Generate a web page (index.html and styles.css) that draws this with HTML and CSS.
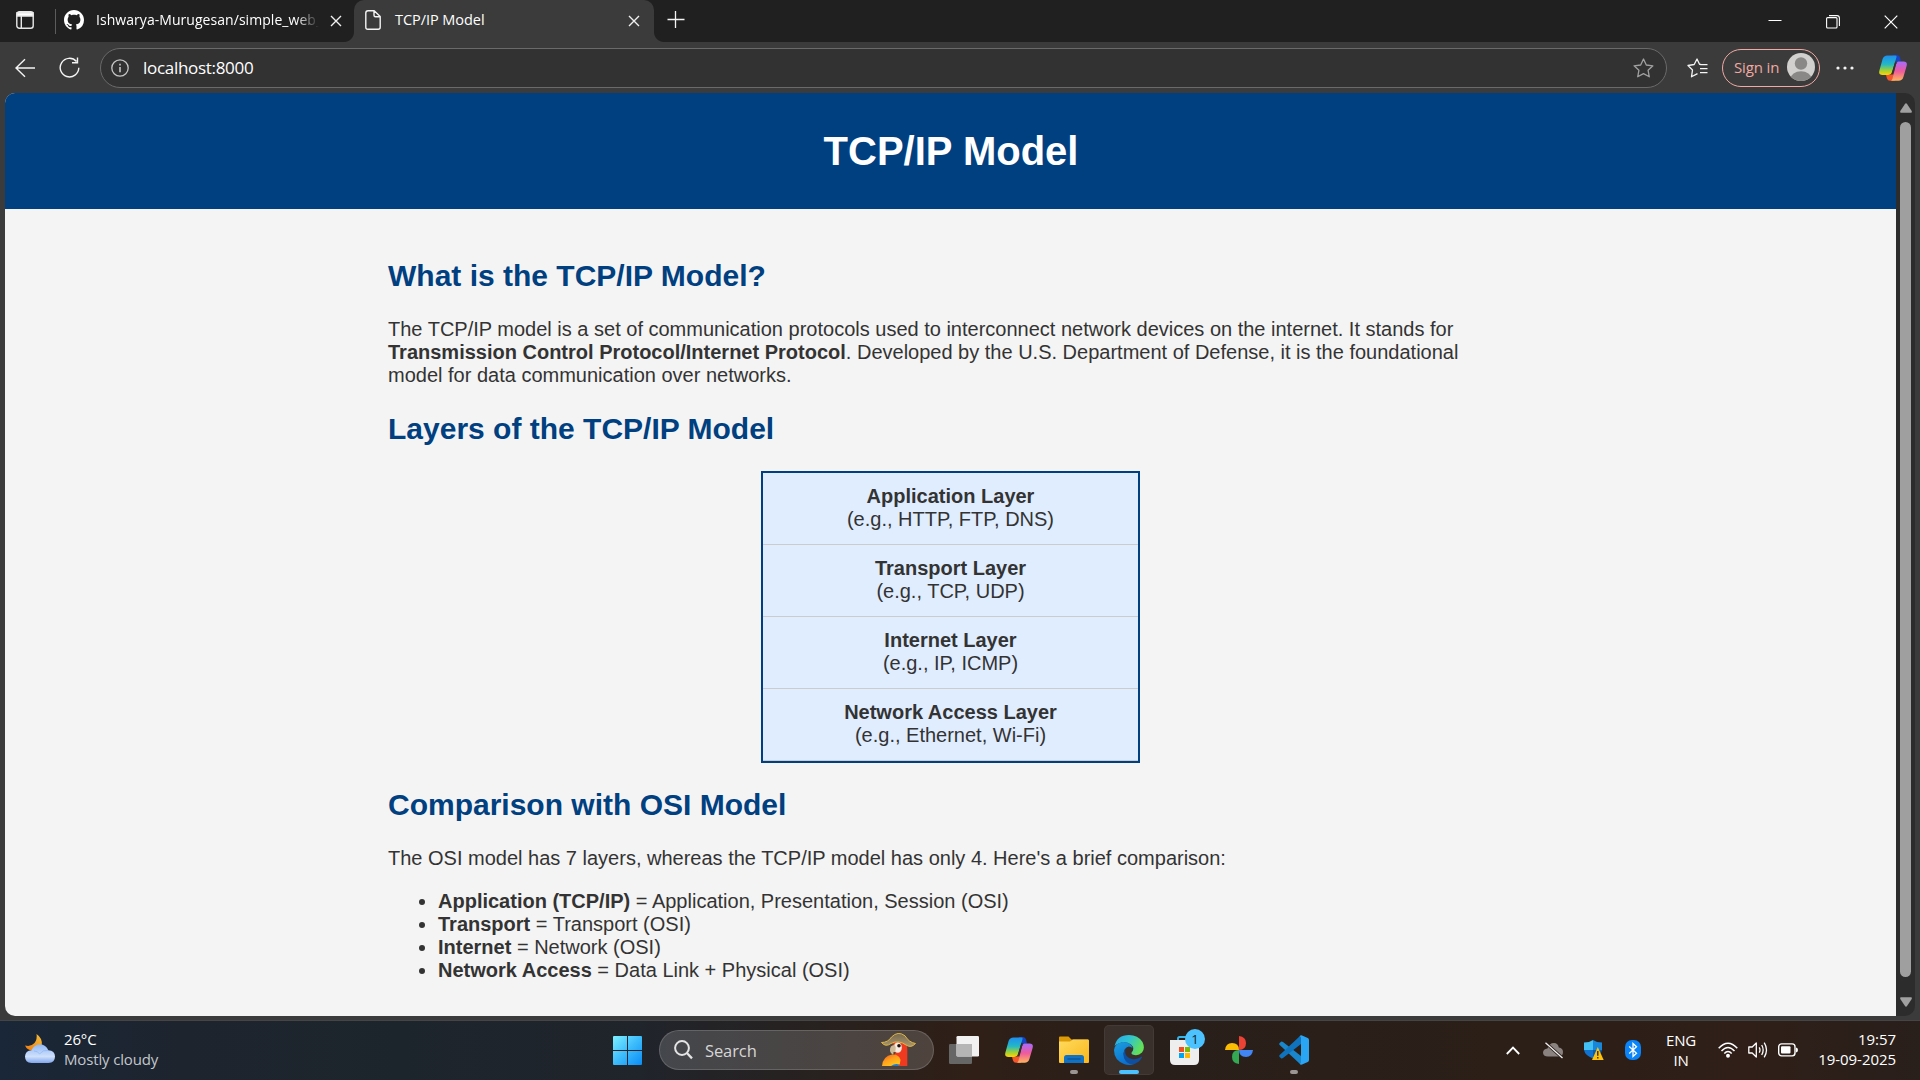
FILE: index.html
```html
<!DOCTYPE html>
<html lang="en">
<head>
<meta charset="utf-8">
<title>TCP/IP Model</title>
<link rel="stylesheet" href="styles.css">
</head>
<body>
<svg class="defs" width="0" height="0" aria-hidden="true">
  <defs>
    <linearGradient id="cpA" x1="0" y1="0" x2="0" y2="1"><stop offset="0" stop-color="#1f8df0"/><stop offset=".45" stop-color="#22b8c8"/><stop offset=".75" stop-color="#9ad03c"/><stop offset="1" stop-color="#ffd400"/></linearGradient>
    <linearGradient id="cpB" x1="0" y1="0" x2="0" y2="1"><stop offset="0" stop-color="#a66bff"/><stop offset=".5" stop-color="#ee5a9c"/><stop offset="1" stop-color="#ffb45c"/></linearGradient>
    <linearGradient id="win" x1="0" y1="0" x2="1" y2="1"><stop offset="0" stop-color="#7df0ff"/><stop offset=".5" stop-color="#3dbcfb"/><stop offset="1" stop-color="#0a8cf5"/></linearGradient>
    <linearGradient id="fold" x1="0" y1="0" x2="1" y2="1"><stop offset="0" stop-color="#ffdb5e"/><stop offset="1" stop-color="#f9b71c"/></linearGradient>
    <linearGradient id="edTop" x1="0" y1="0" x2="1" y2=".4"><stop offset="0" stop-color="#2aa7e8"/><stop offset=".5" stop-color="#2fc3d2"/><stop offset="1" stop-color="#62e05a"/></linearGradient>
    <linearGradient id="edMid" x1="0" y1="0" x2=".5" y2="1"><stop offset="0" stop-color="#1b9fe0"/><stop offset="1" stop-color="#0b6fd0"/></linearGradient>
    <linearGradient id="cloud" x1="0" y1="0" x2="0" y2="1"><stop offset="0" stop-color="#8fb8f8"/><stop offset=".65" stop-color="#cfe0fb"/><stop offset="1" stop-color="#7fa6ee"/></linearGradient>
    <linearGradient id="moon" x1="1" y1="0" x2="0" y2="1"><stop offset="0" stop-color="#f0c040"/><stop offset="1" stop-color="#f27a0e"/></linearGradient>
    <linearGradient id="wing" x1="0" y1="0" x2=".7" y2="1"><stop offset="0" stop-color="#f2571f"/><stop offset=".5" stop-color="#ffa01c"/><stop offset="1" stop-color="#ffc91c"/></linearGradient>
    <linearGradient id="hat" x1="0" y1="0" x2="0" y2="1"><stop offset="0" stop-color="#77684d"/><stop offset="1" stop-color="#a8966f"/></linearGradient>
    <symbol id="copilot" viewBox="0 0 28 26">
      <path d="M14 0H18Q20.300 0 21 2.500L22 6.500H17L13.500 1Z" fill="#1445c8"/>
      <path d="M8.500 .4H16.500Q18 .4 17.400 2.500L13 17Q12.200 20 9 20H3.500Q-.8 20 .4 15.500L3.600 4Q4.700 .4 8.500 .4Z" fill="url(#cpA)"/>
      <path d="M7 20H11L14 17L16 25.800H11Q8.700 25.800 8 23.500Z" fill="#f4562c"/>
      <path d="M19 6.500H24.500Q28.800 6.500 27.600 11L24.400 22Q23.300 25.800 19.500 25.800H11.800Q12.800 25.500 13.400 24L17 9.500Q17.500 6.500 19 6.500Z" fill="url(#cpB)"/>
      <path d="M15.900 7.500H18.500Q17.400 8 16.900 9.500L14 19.500H11.500Q12.600 19 13 17.500Z" fill="#35302f"/>
    </symbol>
  </defs>
</svg>
<div class="desktop">
  <div class="tabstrip">
    <svg class="i-workspaces" width="18" height="18" viewBox="0 0 18 18" fill="none" stroke="#e8e8e8" stroke-width="1.400"><rect x=".8" y=".8" width="16.400" height="16.400" rx="2.500"/><path d="M1 1.800H17V5H1Z" fill="#fff"/><path d="M5.300 5V17"/></svg>
    <span class="tab-sep"></span>
    <div class="tab">
      <svg width="20" height="20" viewBox="0 0 16 16" fill="#fff"><path d="M8 0C3.580 0 0 3.580 0 8c0 3.540 2.290 6.530 5.470 7.590.4.070.55-.17.55-.38 0-.19-.01-.82-.01-1.490-2.010.37-2.530-.49-2.690-.94-.09-.23-.48-.94-.82-1.130-.28-.15-.68-.52-.01-.53.63-.01 1.080.58 1.230.82.72 1.210 1.870.87 2.330.66.070-.52.28-.87.51-1.070-1.780-.2-3.640-.89-3.640-3.950 0-.87.31-1.590.82-2.150-.08-.2-.36-1.020.08-2.120 0 0 .67-.21 2.200.82.64-.18 1.320-.27 2-.27s1.360.09 2 .27c1.530-1.040 2.200-.82 2.200-.82.44 1.100.16 1.920.08 2.120.51.56.82 1.270.82 2.150 0 3.070-1.870 3.750-3.650 3.950.29.25.54.73.54 1.480 0 1.070-.01 1.930-.01 2.200 0 .21.15.46.55.38A8.010 8.010 0 0 0 16 8c0-4.420-3.580-8-8-8z"/></svg>
      <span class="tab-title tab-title-fade">Ishwarya-Murugesan/simple_web_</span>
      <svg class="tab-close" width="12" height="12" viewBox="0 0 12 12" stroke="#f0f0f0" stroke-width="1.400"><path d="M1 1 11 11M11 1 1 11"/></svg>
    </div>
    <div class="tab tab-active">
      <svg width="16" height="20" viewBox="0 0 16 20" fill="none" stroke="#f4f4f4" stroke-width="1.400" stroke-linejoin="round"><path d="M3 .8H9.200L15.200 6.500V17.200Q15.200 19.200 13.200 19.200H2.800Q.8 19.200 .8 17.200V3Q.8 .8 3 .8ZM9 1V5.200Q9 6.700 10.500 6.700H15"/></svg>
      <span class="tab-title">TCP/IP Model</span>
      <svg class="tab-close" width="12" height="12" viewBox="0 0 12 12" stroke="#f0f0f0" stroke-width="1.400"><path d="M1 1 11 11M11 1 1 11"/></svg>
    </div>
    <svg class="i-newtab" width="18" height="18" viewBox="0 0 18 18" stroke="#f4f4f4" stroke-width="1.300"><path d="M.5 8.500H17.500M8.500 0V17"/></svg>
    <div class="win-controls">
      <svg width="14" height="14" viewBox="0 0 14 14" stroke="#fff" stroke-width="1"><path d="M.5 5.500H13.500"/></svg>
      <svg width="14" height="14" viewBox="0 0 14 14" fill="none" stroke="#fff" stroke-width="1.100"><rect x=".6" y="2.600" width="10.400" height="10.400" rx="1"/><path d="M3 .6H11Q13.400 .6 13.400 3V11"/></svg>
      <svg width="14" height="14" viewBox="0 0 14 14" stroke="#fff" stroke-width="1.200"><path d="M.7 .7 13.300 13.300M13.300 .7 .7 13.300"/></svg>
    </div>
  </div>

  <div class="toolbar">
    <svg class="i-back" width="20" height="20" viewBox="0 0 20 20" fill="none" stroke="#f4f4f4" stroke-width="1.400"><path d="M20 10H1M10 1.200 1 10 10 18.800"/></svg>
    <svg class="i-reload" width="21" height="21" viewBox="0 0 21 21" fill="none" stroke="#f4f4f4" stroke-width="1.400"><path d="M17.500 4.500A9.300 9.300 0 1 0 19.800 10.800M18.500 .5V5.700H13"/></svg>
    <div class="address">
      <svg width="18" height="18" viewBox="0 0 18 18" fill="none" stroke="#c6c6c6" stroke-width="1.300"><circle cx="9" cy="9" r="8.200"/><path d="M9 8V13.200M9 4.800V6.500" stroke-width="1.600"/></svg>
      <span class="url">localhost:8000</span>
      <svg class="i-star" width="21" height="20" viewBox="0 0 21 20" fill="none" stroke="#a0a0a0" stroke-width="1.300" stroke-linejoin="round"><path d="M10.500 1 13.300 7 19.900 7.800 15.100 12.300 16.300 18.800 10.500 15.600 4.700 18.800 5.900 12.300 1.100 7.800 7.700 7Z"/></svg>
    </div>
    <svg class="i-favs" width="21" height="20" viewBox="0 0 21 20" fill="none" stroke="#f4f4f4" stroke-width="1.300" stroke-linejoin="round"><path d="M14 6.500 12.500 6.300 10 1 7.200 6.500 1 7.500 5.500 12 4.500 18.800 10.500 15.600M13 6.700H20.500M13 10.700H20.500M13 14.700H20.500"/></svg>
    <div class="signin"><span>Sign in</span>
      <svg width="28" height="28" viewBox="0 0 28 28"><clipPath id="av"><circle cx="14" cy="14" r="14"/></clipPath><g clip-path="url(#av)"><rect width="28" height="28" fill="#d2d0ce"/><circle cx="14" cy="10.500" r="6.200" fill="#8a8886"/><ellipse cx="14" cy="26" rx="10.500" ry="7.700" fill="#8a8886"/></g></svg>
    </div>
    <svg class="i-more" width="18" height="4" viewBox="0 0 18 4" fill="#f4f4f4"><circle cx="2" cy="2" r="1.600"/><circle cx="9" cy="2" r="1.600"/><circle cx="16" cy="2" r="1.600"/></svg>
    <svg class="i-copilot" width="28" height="26"><use href="#copilot"/></svg>
  </div>

  <div class="viewport">
    <main class="page">
      <header class="page-header"><h1>TCP/IP Model</h1></header>
      <section class="content">
        <h2>What is the TCP/IP Model?</h2>
        <p>The TCP/IP model is a set of communication protocols used to interconnect network devices on the internet. It stands for <strong>Transmission Control Protocol/Internet Protocol</strong>. Developed by the U.S. Department of Defense, it is the foundational model for data communication over networks.</p>
        <h2>Layers of the TCP/IP Model</h2>
        <div class="layers">
          <div class="layer"><strong>Application Layer</strong><br>(e.g., HTTP, FTP, DNS)</div>
          <div class="layer"><strong>Transport Layer</strong><br>(e.g., TCP, UDP)</div>
          <div class="layer"><strong>Internet Layer</strong><br>(e.g., IP, ICMP)</div>
          <div class="layer"><strong>Network Access Layer</strong><br>(e.g., Ethernet, Wi-Fi)</div>
        </div>
        <h2>Comparison with OSI Model</h2>
        <p>The OSI model has 7 layers, whereas the TCP/IP model has only 4. Here's a brief comparison:</p>
        <ul>
          <li><strong>Application (TCP/IP)</strong> = Application, Presentation, Session (OSI)</li>
          <li><strong>Transport</strong> = Transport (OSI)</li>
          <li><strong>Internet</strong> = Network (OSI)</li>
          <li><strong>Network Access</strong> = Data Link + Physical (OSI)</li>
        </ul>
      </section>
    </main>
    <div class="scrollbar">
      <svg width="12" height="10" viewBox="0 0 12 10" fill="#a0a0a0"><path d="M6 .3Q6.600 .3 7.200 1.200L11.700 8Q12.300 9.700 11 9.700H1Q-.3 9.700 .3 8L4.800 1.200Q5.400 .3 6 .3Z"/></svg>
      <span class="thumb"></span>
      <svg width="12" height="10" viewBox="0 0 12 10" fill="#a0a0a0"><path d="M6 9.700Q6.600 9.700 7.200 8.800L11.700 2Q12.300 .3 11 .3H1Q-.3 .3 .3 2L4.800 8.800Q5.400 9.700 6 9.700Z"/></svg>
    </div>
  </div>

  <div class="taskbar">
    <div class="weather">
      <svg width="30" height="30" viewBox="0 0 30 30"><path d="M11.500 0Q17.500 4 16.800 11Q14 17 7 16.500Q2 16 0 11.500Q6 13 9.500 9Q12.500 5 11.500 0Z" fill="url(#moon)"/><path d="M6.500 29Q0 28.500 0 22.500Q.3 16.500 6.500 16.200Q9 10.500 15 10.500Q21 10.500 23.300 16.200Q30 16.500 30 22.500Q30 28.500 23.500 29Z" fill="url(#cloud)"/><path d="M9 17Q13 17 14.500 20Q18 15.500 23 16.400" fill="none" stroke="#7fa8ef" stroke-width=".8" opacity=".6"/></svg>
      <div class="weather-text"><span>26°C</span><span class="muted">Mostly cloudy</span></div>
    </div>
    <div class="apps">
      <svg class="i-start" width="29" height="29" viewBox="0 0 29 29" fill="url(#win)"><path d="M1 0H14V14H0V1Q0 0 1 0ZM15 0H28Q29 0 29 1V14H15ZM0 15H14V29H1Q0 29 0 28ZM15 15H29V28Q29 29 28 29H15Z"/></svg>
      <div class="search">
        <svg width="19" height="20" viewBox="0 0 19 20" fill="none" stroke="#e4e4e4" stroke-width="2"><circle cx="8" cy="8" r="6.900"/><path d="M12.900 13 18 18.400" stroke-width="2.300"/></svg>
        <span>Search</span>
        <svg class="i-parrot" width="35" height="34" viewBox="0 0 35 34"><path d="M12 9H23Q26.500 11 26.300 17V33H15L11 23Q13.500 21 13 17Z" fill="#f03a20"/><path d="M1 33Q2 23 11 21.500Q18 21 19.500 27Q19.500 31 17 33Z" fill="url(#wing)"/><path d="M10 33Q14 30 18.500 31.500L17.500 33Z" fill="#1d7bd0"/><ellipse cx="16.800" cy="14.500" rx="4" ry="5.300" fill="#f6ece2"/><path d="M9 18Q8.500 12 13.500 12Q15.500 14 14.300 18Q13.500 21 12.300 22Q9.500 20.500 9 18Z" fill="#cdbb98"/><path d="M12.500 19Q14.500 18.500 14.500 20Q14 21.500 12.300 22Z" fill="#4e4436"/><circle cx="18" cy="12.800" r="1.800" fill="#1b1410"/><path d="M.5 9.500Q7 9.500 10.500 4Q17-2.500 24 2.800Q28 9.500 34.500 10.500Q30 15.500 25 12Q17.500 6.500 10 10.500Q4.500 14.500 .5 9.500Z" fill="url(#hat)" stroke="#dfb640" stroke-width="1"/></svg>
      </div>
      <svg class="i-taskview" width="30" height="28" viewBox="0 0 30 28"><rect y="8" width="23" height="20" rx="1.300" fill="#666"/><rect x="7.500" width="22.500" height="20.500" rx="1.300" fill="#f1f1f1"/><path d="M7.500 8H23V20.500H9Q7.500 20.500 7.500 19Z" fill="#b5b5b5"/></svg>
      <svg class="i-tb-copilot" width="28" height="26"><use href="#copilot"/></svg>
      <div class="app app-explorer">
        <svg width="30" height="27" viewBox="0 0 30 27"><path d="M0 1.500Q0 .5 1 .5H9.500L12.500 3.500H29V9H0Z" fill="#dc9a07"/><path d="M0 5.500H11L14 3.500H29Q30 3.500 30 4.500V26Q30 27 29 27H1Q0 27 0 26Z" fill="url(#fold)"/><path d="M5 27V21.500Q5 19 7.500 19H22.500Q25 19 25 21.500V27Z" fill="#1172c4"/><path d="M8.500 23H21.500" stroke="#0a4f93" stroke-width="1.200"/></svg>
        <i class="running"></i>
      </div>
      <div class="app app-edge">
        <svg width="30" height="30" viewBox="0 0 30 30"><path d="M.6 11Q3 0 15 0Q24 0 28.500 7Q31.500 13.500 28 17.500Q24 21.500 18.500 19.500Q16.800 18.500 18 17Q21 13 17 9.500Q9 4.500 .6 11Z" fill="url(#edTop)"/><path d="M0 15Q1 8 9 7Q17 7 18.700 13Q14 9.500 11 14Q7.500 20.500 13 26Q16 29 20 29Q15 31 10 29Q0 25 0 15Z" fill="url(#edMid)"/><path d="M11.200 14Q10 22 18 24Q23 25 27.500 21.800Q28.500 21.500 28 22.600Q25 27.500 20 29.300Q13 30 10 23Q8.500 17 11.200 14Z" fill="#0e4fa0"/></svg>
        <i class="running running-active"></i>
      </div>
      <div class="app app-store">
        <svg width="29" height="29" viewBox="0 0 29 29"><path d="M8 6V2.500Q8 1 9.500 1H18Q20 1 20 2.500V6" fill="none" stroke="#35b4ea" stroke-width="1.900"/><path d="M0 4H29V24Q29 29 24 29H5Q0 29 0 24Z" fill="#eee"/><rect x="9" y="11" width="5" height="5" fill="#f25022"/><rect x="15" y="11" width="5" height="5" fill="#7fba00"/><rect x="9" y="17" width="5" height="5" fill="#00a4ef"/><rect x="15" y="17" width="5" height="5" fill="#ffb900"/></svg>
        <b class="badge">1</b>
      </div>
      <svg class="i-photos" width="28" height="28" viewBox="0 0 28 28"><path d="M14 0Q21 .8 21 7Q21 14 14 14Z" fill="#ea4335"/><path d="M28 14Q27.200 21 21 21Q14 21 14 14Z" fill="#4285f4"/><path d="M14 28Q7 27.200 7 21Q7 14 14 14Z" fill="#34a853"/><path d="M0 14Q.8 7 7 7Q14 7 14 14Z" fill="#fbbc04"/></svg>
      <div class="app app-code">
        <svg width="30" height="30" viewBox="0 0 30 30"><path d="M.7 10Q-.3 9 .7 8L2 6.800Q3 6.300 4 7L22 21V29.500L20.500 28.500Z" fill="#1a86cc"/><path d="M.7 20Q-.3 21 .7 22L2 23.200Q3 23.700 4 23L22 9V.5L20.500 1.500Z" fill="#0f74bd"/><path d="M20.500 1.500Q21.500 0 23 .4L28.800 3Q30 3.600 30 5V25Q30 26.400 28.800 27L23 29.600Q21.500 30 20.500 28.500Q22 29 22 27V3Q22 1 20.500 1.500Z" fill="#2aa5f3"/></svg>
        <i class="running"></i>
      </div>
    </div>
    <div class="tray">
      <svg class="i-chev" width="14" height="9" viewBox="0 0 14 9" fill="none" stroke="#fff" stroke-width="1.800"><path d="M.8 8 7 1.600 13.200 8"/></svg>
      <svg class="i-cloud" width="20" height="17" viewBox="0 0 20 17"><path d="M5 14.500Q0 14.300 0 10.500Q.2 7 4.500 6.500Q6 1 11 1Q15 1.200 15.800 5.500Q20 6 20 10Q20 14.500 15.500 14.500Z" fill="#8a827e"/><path d="M2.500 .7 19.500 16" stroke="#2b1f19" stroke-width="3"/><path d="M2.500 .7 19.500 16" stroke="#f0f0f0" stroke-width="1.300"/></svg>
      <svg class="i-shield" width="20" height="20" viewBox="0 0 20 20"><path d="M0 2.500Q5.500 2.500 9 0V10H0Z" fill="#43c1f5"/><path d="M18 2.500Q12.500 2.500 9 0V10H18Z" fill="#1787dc"/><path d="M0 10H9V18.500Q1 15.500 0 10Z" fill="#1173cf"/><path d="M18 10H9V18.500Q17 15.500 18 10Z" fill="#0b5cad"/><path d="M13.800 7 19.700 20H8Z" fill="#ffc20e"/><path d="M13.800 11V15.800M13.800 17V18.500" stroke="#222" stroke-width="1.300"/></svg>
      <svg class="i-bt" width="16" height="20" viewBox="0 0 16 20"><rect width="16" height="20" rx="7" fill="#0a84f8"/><path d="M4.200 6.500 11.500 13.300 8 16.500V3.500L11.500 6.700 4.200 13.500" fill="none" stroke="#fff" stroke-width="1.300"/></svg>
      <div class="lang"><span>ENG</span><span>IN</span></div>
      <svg class="i-wifi" width="20" height="16" viewBox="0 0 20 16" fill="none" stroke="#fff" stroke-width="1.500"><path d="M.7 6.300Q10-3.800 19.300 6.300M3.500 9Q10 1.800 16.500 9M6.300 11.600Q10 7.400 13.700 11.600"/><circle cx="10" cy="13.700" r="1.200" fill="#fff"/></svg>
      <svg class="i-vol" width="20" height="18" viewBox="0 0 20 18" fill="none" stroke="#fff" stroke-width="1.300" stroke-linejoin="round"><path d="M.8 6H4.200L8.300 2V16L4.200 12H.8ZM11.200 6.300Q12.800 9 11.200 11.700M13.700 4Q16.600 9 13.700 14M16.200 1.700Q20.800 9 16.200 16.300"/></svg>
      <svg class="i-bat" width="20" height="14" viewBox="0 0 20 14"><rect x=".7" y=".9" width="16.300" height="12" rx="2.800" fill="none" stroke="#fff" stroke-width="1.400"/><rect x="3" y="3.200" width="9.500" height="7.400" rx="1" fill="#fff"/><path d="M18 4.500Q20 4.700 20 7Q20 9.300 18 9.500Z" fill="#fff"/></svg>
      <div class="clock"><span>19:57</span><span>19-09-2025</span></div>
    </div>
  </div>
</div>
</body>
</html>
```
FILE: styles.css
```css
* { box-sizing: border-box; }
body { margin: 0; background: #3b3b3b; }
svg { display: block; flex: none; }
.defs { position: absolute; }

.desktop {
  width: 1920px;
  height: 1080px;
  overflow: hidden;
  display: flex;
  flex-direction: column;
  background: #3b3b3b;
  color: #fff;
  font-family: "Open Sans", "Noto Sans", sans-serif;
}

/* Tab strip */
.tabstrip {
  height: 42px;
  flex: none;
  display: flex;
  align-items: flex-start;
  background: #202020;
}
.i-workspaces { margin: 11px 0 0 16px; }
.tab-sep { width: 1px; height: 25px; margin: 9px 7px 0 21px; background: #5c5c5c; }
.tab { display: flex; width: 291px; height: 42px; padding-top: 10px; }
.tab:not(.tab-active) { padding-left: 1px; }
.tab-title {
  flex: 1;
  margin-left: 12px;
  height: 20px;
  line-height: 19px;
  font-size: 14.5px;
  letter-spacing: -0.05px;
  white-space: nowrap;
}
.tab-title-fade {
  flex: none;
  width: 224px;
  font-size: 14px;
  letter-spacing: 0.05px;
  -webkit-mask-image: linear-gradient(90deg, #000 200px, transparent 223px);
  mask-image: linear-gradient(90deg, #000 200px, transparent 223px);
}
.tab-close { margin: 5px 0 0 10px; }
.tab-active {
  position: relative;
  width: 300px;
  padding: 10px 14px 0 11px;
  background: #3b3b3b;
  border-radius: 10px 10px 0 0;
}
.tab-active::before,
.tab-active::after {
  content: "";
  position: absolute;
  bottom: 0;
  width: 10px;
  height: 10px;
}
.tab-active::before { left: -10px; background: radial-gradient(circle at 0 0, #202020 9.5px, #3b3b3b 10.5px); }
.tab-active::after { right: -10px; background: radial-gradient(circle at 100% 0, #202020 9.5px, #3b3b3b 10.5px); }
.tab-active .tab-title { margin-left: 14px; }
.i-newtab { margin: 11px 0 0 13px; }
.win-controls { display: flex; gap: 44px; margin: 15px 22px 0 auto; }

/* Toolbar */
.toolbar {
  height: 50px;
  flex: none;
  display: flex;
  align-items: center;
  padding-top: 1px;
}
.i-back { margin-left: 15px; }
.i-reload { margin-left: 24px; }
.address {
  display: flex;
  align-items: center;
  width: 1567px;
  height: 40px;
  margin-left: 20px;
  padding: 0 12px 0 10px;
  border: 1px solid #6a6a6a;
  border-radius: 20px;
  background: #323232;
}
.url { margin-left: 14px; font-size: 17px; letter-spacing: -0.3px; line-height: 24px; }
.i-star { margin-left: auto; }
.i-favs { margin-left: 20px; }
.signin {
  display: flex;
  align-items: center;
  width: 98px;
  height: 38px;
  margin-left: 14px;
  padding: 0 4px 1px 11px;
  border: 1px solid #f0a9a4;
  border-radius: 19px;
  color: #f0a9a4;
  font-size: 15px;
  letter-spacing: -0.15px;
}
.signin span { white-space: nowrap; }
.signin svg { margin-left: auto; }
.i-more { margin-left: 16px; }
.i-copilot { margin-left: 25px; }

/* Page viewport */
.viewport {
  display: flex;
  height: 923px;
  flex: none;
  margin: 1px 5px 0;
  border-radius: 10px;
  overflow: hidden;
  background: #2c2c2c;
}
.page {
  width: 1891px;
  background: #f4f4f4;
  color: #333;
  font: 20px/23px "Liberation Sans", Arial, sans-serif;
}
.page-header {
  height: 116px;
  display: flex;
  align-items: center;
  justify-content: center;
  background: #004080;
  color: #fff;
}
.page-header h1 { margin: 0; padding-left: 1px; font-size: 40px; line-height: 46px; }
.content { width: 1125px; margin: 0 auto; padding-top: 50px; }
.content h2 { margin: 0 0 25px; color: #004080; font-size: 30px; line-height: 34px; }
.content p { margin: 0 0 25px; }
.content p:last-of-type { margin-bottom: 20px; }
.content ul { margin: 0; padding-left: 50px; }
.layers {
  width: 379px;
  margin: 0 auto 25px;
  border: 2px solid #004080;
  background: #e0edff;
  text-align: center;
}
.layer { height: 72px; padding-top: 12px; border-bottom: 1px solid #ccc; }
.scrollbar {
  width: 19px;
  display: flex;
  flex-direction: column;
  align-items: center;
  padding: 10px 0 9px;
}
.thumb { width: 11px; height: 855px; margin: 9px 0 20px; border-radius: 6px; background: #9f9f9f; }

/* Taskbar */
.taskbar {
  height: 60px;
  flex: none;
  margin-top: 4px;
  display: flex;
  border-top: 1px solid #454545;
  background: linear-gradient(90deg, #1a2738 0, #1d242e 180px, #1d252c 400px, #20242b 640px, #29211d 850px, #2f1f17 970px, #291f1a 1150px, #2b1f18 1500px, #2f1f18 1750px, #291f1b 1920px);
  font-size: 15px;
}
.weather { display: flex; width: 613px; padding: 13px 0 0 25px; gap: 9px; }
.weather-text,
.lang,
.clock { display: flex; flex-direction: column; line-height: 20px; white-space: nowrap; }
.weather-text { margin-top: -5px; letter-spacing: -0.15px; }
.muted { color: #c3c7cc; }
.apps { display: flex; align-items: flex-start; }
.i-start { margin-top: 15px; }
.search {
  display: flex;
  align-items: center;
  width: 275px;
  height: 40px;
  margin: 9px 0 0 17px;
  padding: 0 17px 0 14px;
  border: 1px solid rgba(255, 255, 255, .16);
  border-radius: 20px;
  background: rgba(255, 255, 255, .16);
  color: #d6d6d6;
  font-size: 16.5px;
  letter-spacing: -0.1px;
}
.search span { margin-left: 12px; }
.i-parrot { margin-left: auto; }
.i-taskview { margin: 15px 0 0 15px; }
.i-tb-copilot { margin: 16px 0 0 26px; }
.app { position: relative; display: flex; justify-content: center; width: 50px; height: 50px; margin-top: 4px; padding-top: 10px; }
.app-explorer { margin-left: 16px; padding-top: 11px; }
.app-edge { margin-left: 5px; border-radius: 5px; background: rgba(255, 255, 255, .08); box-shadow: inset 0 0 0 1px rgba(255, 255, 255, .05); }
.app-store { margin-left: 5px; padding-top: 11px; }
.app-code { margin-left: 16px; }
.i-photos { margin: 15px 0 0 16px; }
.running { position: absolute; left: 21px; bottom: 1px; width: 8px; height: 4px; border-radius: 2px; background: #9b9693; }
.running-active { left: 15px; width: 20px; background: #4cc2ff; }
.badge {
  position: absolute;
  left: 26px;
  top: 4px;
  width: 20px;
  height: 20px;
  border-radius: 50%;
  background: #4cc2ff;
  color: #14242e;
  font-size: 13px;
  font-weight: 400;
  line-height: 20px;
  text-align: center;
}
.tray { display: flex; align-items: flex-start; margin-left: auto; padding-right: 24px; }
.i-chev { margin-top: 25px; }
.i-cloud { margin: 21px 0 0 23px; }
.i-shield { margin: 19px 0 0 21px; }
.i-bt { margin: 19px 0 0 21px; }
.lang { width: 40px; margin: 9px 0 0 20px; align-items: center; letter-spacing: -0.2px; }
.i-wifi { margin: 21px 0 0 17px; }
.i-vol { margin: 20px 0 0 10px; }
.i-bat { margin: 22px 0 0 10px; }
.clock { width: 98px; margin-top: 8px; align-items: flex-end; letter-spacing: -0.05px; }
```
